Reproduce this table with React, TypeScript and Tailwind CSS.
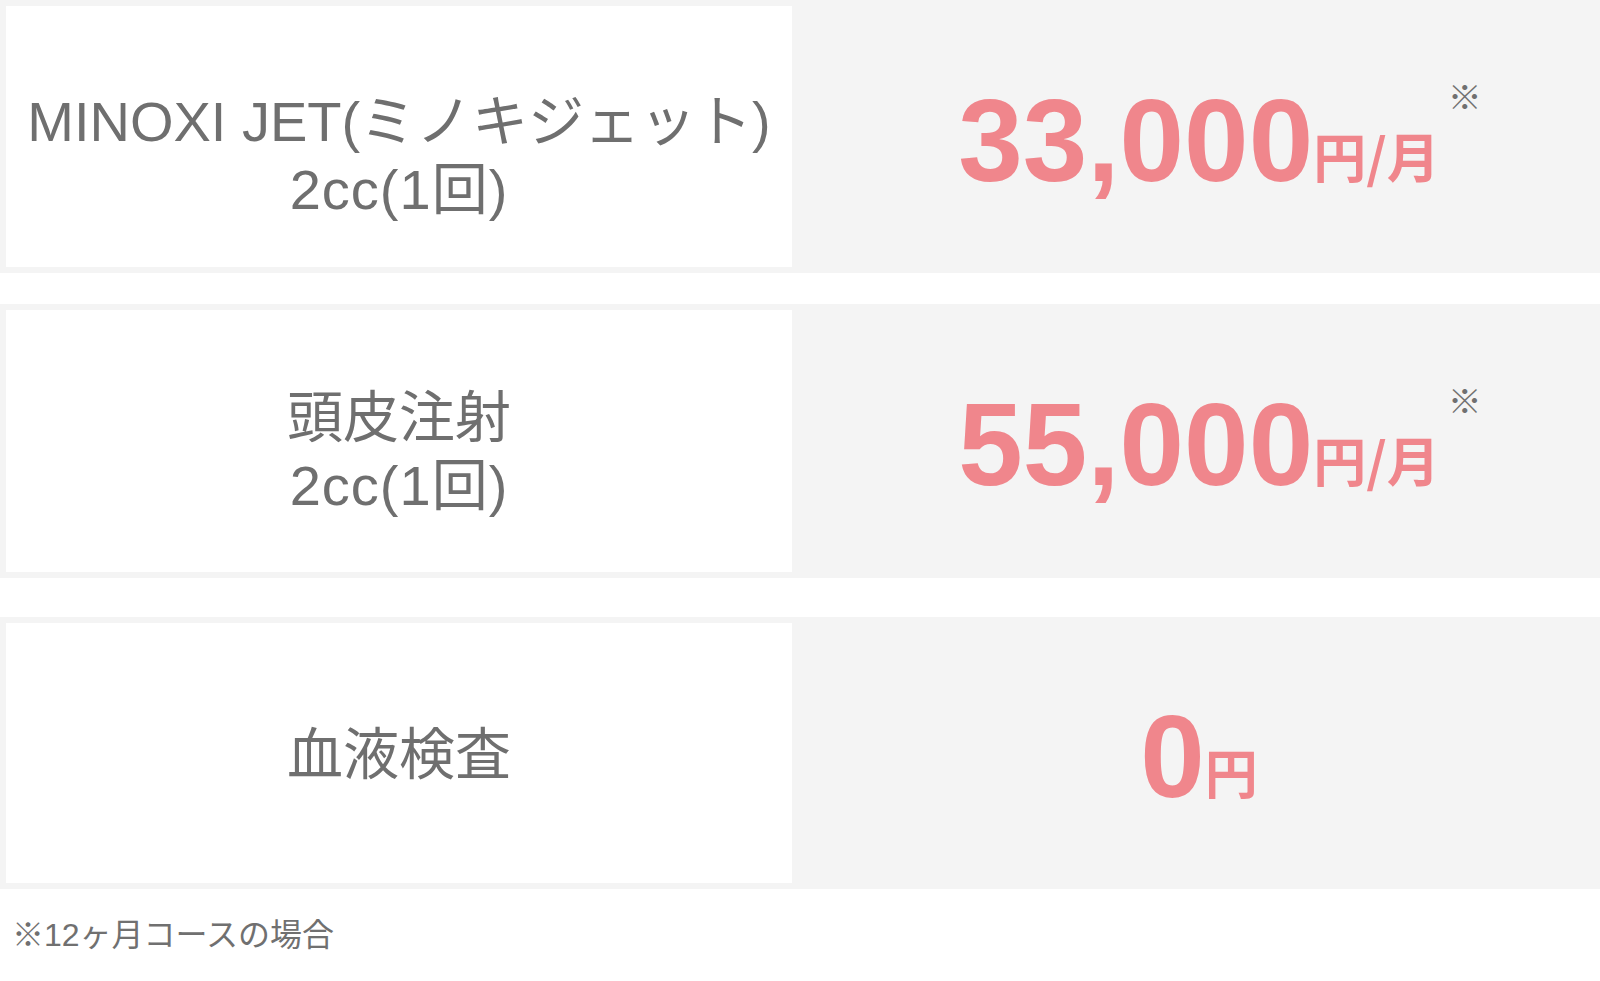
import React from "react";

type RowProps = {
  label: React.ReactNode;
  price: string;
  unit: string;
  note?: boolean;
  rowClass: string;
  labelClass: string;
};

function Row({ label, price, unit, note, rowClass, labelClass }: RowProps) {
  return (
    <div className={`flex bg-[#f4f4f4] ${rowClass}`}>
      <div
        className={`m-[6px] w-[786px] shrink-0 bg-white flex items-center justify-center text-center text-[56px] leading-[68px] text-[#6f6f6f] ${labelClass}`}
      >
        <div>{label}</div>
      </div>
      <div className="flex-1 flex items-center justify-center pt-[8px]">
        <div className="relative flex items-baseline text-[#f0868c] font-['Liberation_Sans','Noto_Sans_CJK_JP',sans-serif]">
          <span className="text-[116px] font-bold leading-none">{price}</span>
          <span className="relative -top-[3px] text-[53px] font-bold leading-none font-['Noto_Sans_CJK_JP',sans-serif]">{unit}</span>
          {note && (
            <span className="absolute left-full top-[-4px] ml-[8px] text-[34px] font-bold leading-none text-[#707070] font-['Noto_Sans_CJK_JP',sans-serif]">
              ※
            </span>
          )}
        </div>
      </div>
    </div>
  );
}

export default function App() {
  return (
    <div className="w-[1600px] min-h-[981px] bg-white font-['Liberation_Sans','Noto_Sans_CJK_JP',sans-serif]">
      <Row
        rowClass="h-[273px]"
        labelClass="pt-[38px]"
        label={
          <>
            MINOXI JET(ミノキジェット)
            <br />
            <span className="tracking-[1px]">2cc(1回)</span>
          </>
        }
        price="33,000"
        unit="円/月"
        note
      />
      <Row
        rowClass="h-[274px] mt-[31px]"
        labelClass="pt-[22px]"
        label={
          <>
            頭皮注射
            <br />
            <span className="tracking-[1px]">2cc(1回)</span>
          </>
        }
        price="55,000"
        unit="円/月"
        note
      />
      <Row
        rowClass="h-[272px] mt-[39px]"
        labelClass="pt-[4px]"
        label={<>血液検査</>}
        price="0"
        unit="円"
      />
      <p className="mt-[23px] pl-[12px] text-[32px] leading-[46px] text-[#707070]">
        ※12ヶ月コースの場合
      </p>
    </div>
  );
}
